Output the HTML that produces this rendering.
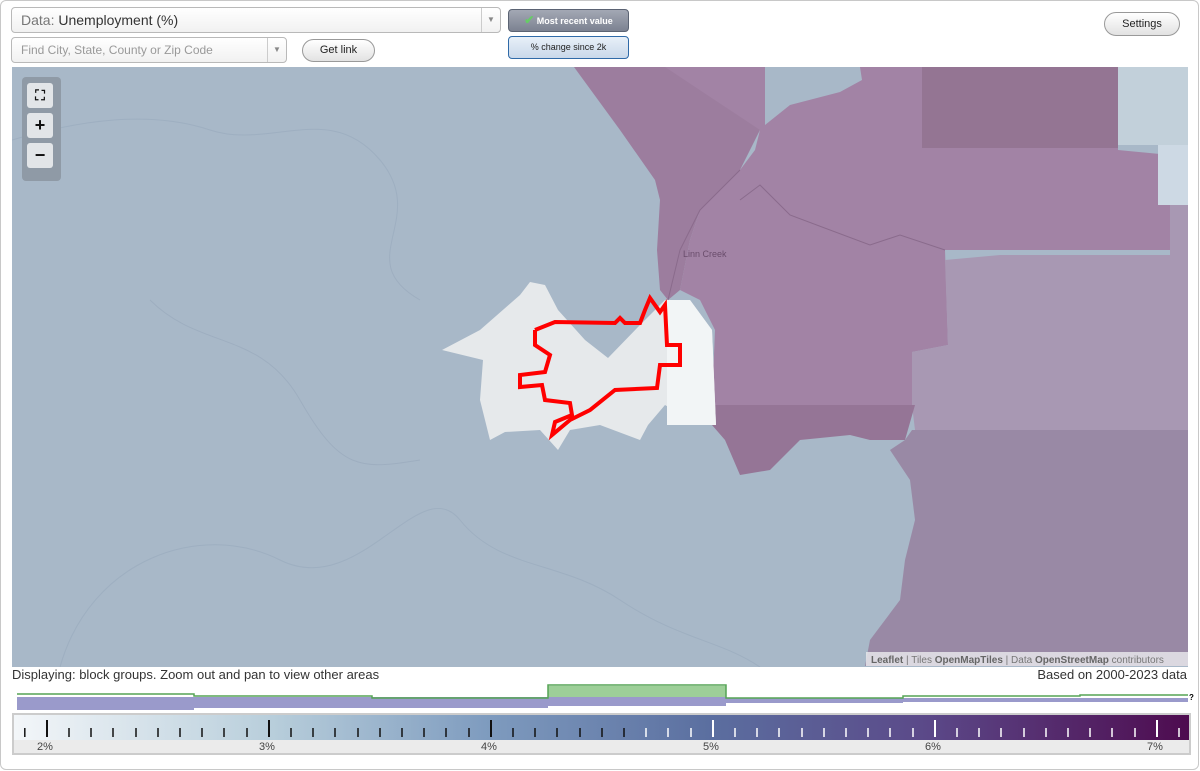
<!DOCTYPE html>
<html><head><meta charset="utf-8"><style>
*{box-sizing:border-box;margin:0;padding:0}
body{width:1200px;height:771px;background:#fff;font-family:"Liberation Sans",Arial,sans-serif;position:relative;overflow:hidden}
.frame{position:absolute;left:0;top:0;width:1199px;height:770px;border:1px solid #c8c8c8;border-radius:6px}
.sel{position:absolute;border:1px solid #b9b9b9;border-radius:4px;background:linear-gradient(#fff,#f1f1f1);color:#333}
.arr{position:absolute;right:0;top:0;bottom:0;width:19px;border-left:1px solid #ccc;color:#888;font-size:8px;text-align:center}
.btn{position:absolute;border:1px solid #999;border-radius:12px;background:linear-gradient(#fff,#e2e2e2);font-size:11px;text-align:center;color:#222}
.tb{position:absolute;border-radius:4px;font-size:9px;text-align:center}
.ctl{position:absolute;left:22px;top:77px;width:39px;height:104px;background:#8f9aa6;border-radius:4px}
.cb{position:absolute;left:5px;width:26px;height:25px;background:#e2e5e8;border-radius:3px;text-align:center;font-weight:bold;font-size:18px;line-height:25px;color:#111}
.t{position:absolute;font-size:13px;color:#333}
</style></head><body>
<div class="frame"></div>
<div class="sel" style="left:11px;top:7px;width:490px;height:26px;font-size:14px;line-height:24px;padding-left:9px"><span style="color:#777">Data:</span> Unemployment (%)<div class="arr" style="line-height:24px">▼</div></div>
<div class="sel" style="left:11px;top:37px;width:276px;height:26px;font-size:12px;line-height:24px;padding-left:9px;color:#999">Find City, State, County or Zip Code<div class="arr" style="line-height:24px">▼</div></div>
<div class="btn" style="left:302px;top:39px;width:73px;height:23px;line-height:21px">Get link</div>
<div class="tb" style="left:508px;top:9px;width:121px;height:23px;background:linear-gradient(#a3a8b4,#7c8291);border:1px solid #5b6373;color:#fff;font-weight:bold;line-height:21px"><span style="color:#6c6;font-size:12px">✔</span> Most recent value</div>
<div class="tb" style="left:508px;top:36px;width:121px;height:23px;background:linear-gradient(#e8f0f8,#c9d8ea);border:1px solid #2f6aa8;color:#222;line-height:21px">% change since 2k</div>
<div class="btn" style="left:1104px;top:12px;width:76px;height:24px;line-height:22px">Settings</div>

<svg style="position:absolute;left:12px;top:67px" width="1176" height="600" viewBox="12 67 1176 600">
<rect x="12" y="67" width="1176" height="600" fill="#a8b8c8"/>
<g fill="none" stroke="#9aabbd" stroke-width="1" opacity=".7">
<path d="M12 140 C80 120 150 110 210 130 S330 100 380 160 S350 260 420 300"/>
<path d="M60 667 C90 560 200 520 280 560 S420 470 460 520 S560 560 620 600 S720 640 760 667"/>
<path d="M150 300 C200 350 260 330 300 400 S360 470 420 460"/>
</g>
<polygon fill="#9c7d9e" points="574,67 765,67 765,120 750,150 740,170 720,190 700,210 690,240 680,290 668,300 660,290 657,250 660,200 655,180 620,130"/>
<polygon fill="#a283a5" points="665,67 765,67 765,125 790,105 840,92 862,80 860,67 922,67 922,148 1118,148 1118,150 1170,155 1170,250 945,250 948,345 912,352 912,405 712,405 715,330 700,300 680,290 690,240 700,210 740,170 755,150 760,130"/>
<polygon fill="#947593" points="922,67 1118,67 1118,148 922,148"/>
<polygon fill="#c2d0da" points="1118,67 1188,67 1188,145 1118,145"/>
<polygon fill="#a898b3" points="1170,145 1188,145 1188,430 945,430 915,430 912,405 912,352 948,345 945,260 1000,255 1170,255"/>
<polygon fill="#cdd9e4" points="1158,145 1188,145 1188,205 1158,205"/>
<polygon fill="#957596" points="712,405 915,405 905,440 870,440 850,435 800,440 770,470 740,475 725,440 712,425"/>
<polygon fill="#9989a5" points="912,430 1188,430 1188,666 865,666 870,640 900,600 905,560 915,520 910,480 890,450 905,440"/>
<polygon fill="#e6e9eb" points="442,350 480,330 520,295 530,282 545,285 558,310 585,340 608,358 640,325 665,300 690,300 712,330 716,425 700,425 665,405 648,425 640,440 600,425 570,430 558,450 540,430 505,432 490,440 480,400 483,360"/>
<polygon fill="#f2f5f6" points="667,300 690,300 712,330 716,425 667,425"/>
<polyline fill="none" stroke="#8a6b8c" stroke-width="1" points="740,170 720,190 700,210 680,250 668,300"/>
<polyline fill="none" stroke="#8a6b8c" stroke-width="1" points="740,200 760,185 790,215 830,230 870,245 900,235 945,250"/>
<polyline fill="none" stroke="#ff0000" stroke-width="4" stroke-linejoin="miter" points="535,330 555,322 615,323 620,318 625,323 640,323 645,310 650,298 660,312 665,305 667,345 680,345 680,365 660,365 657,388 615,390 590,410 570,420 552,435 555,422 572,415 570,403 545,400 542,385 520,387 520,375 545,372 550,355 535,345 535,330"/>
<text x="683" y="257" font-size="9" fill="#6a4d6c" font-family="Liberation Sans">Linn Creek</text>
<rect x="866" y="652" width="322" height="14" fill="#e6e6ea" opacity=".85"/>
<text x="871" y="663" font-size="10" fill="#777" font-family="Liberation Sans"><tspan font-weight="bold" fill="#666">Leaflet</tspan> | Tiles <tspan font-weight="bold" fill="#666">OpenMapTiles</tspan> | Data <tspan font-weight="bold" fill="#666">OpenStreetMap</tspan> contributors</text>
</svg>

<div class="ctl">
<div class="cb" style="top:6px;font-size:14px">⛶</div>
<div class="cb" style="top:36px">+</div>
<div class="cb" style="top:66px">−</div>
</div>

<div class="t" style="left:12px;top:667px">Displaying: block groups. Zoom out and pan to view other areas</div>
<div class="t" style="right:13px;top:667px">Based on 2000-2023 data</div>

<svg style="position:absolute;left:0;top:680px" width="1200" height="35" viewBox="0 680 1200 35">
<g fill="#9a9acb">
<rect x="17" y="697" width="177" height="13"/><rect x="194" y="697" width="178" height="11"/><rect x="372" y="697" width="176" height="11"/><rect x="548" y="697" width="178" height="9"/><rect x="726" y="698" width="177" height="5"/><rect x="903" y="698" width="177" height="4"/><rect x="1080" y="698" width="108" height="4"/>
</g>
<rect x="548" y="686" width="178" height="11" fill="#9dcf98"/>
<polyline fill="none" stroke="#55a455" stroke-width="1.5" points="17,694 194,694 194,696 372,696 372,698 548,698 548,685 726,685 726,698 903,698 903,696 1080,696 1080,695 1188,695"/>
<text x="1189" y="700" font-size="8" font-weight="bold" font-family="Liberation Sans">?</text>
</svg>

<div style="position:absolute;left:12px;top:713px;width:1179px;height:42px;border:2px solid #ccc;background:#ebebeb">
<div style="position:absolute;left:0;top:0;width:1175px;height:25px;background:linear-gradient(90deg,#f3f6f9 0%,#b8cedb 22%,#7f9cbf 40%,#5b6fa0 59%,#5b4888 78%,#4e0b4f 100%)"></div>
<div style="position:absolute;top:26px;left:0;width:1175px;font-size:11px;color:#444">
<span style="position:absolute;left:23px">2%</span><span style="position:absolute;left:245px">3%</span><span style="position:absolute;left:467px">4%</span><span style="position:absolute;left:689px">5%</span><span style="position:absolute;left:911px">6%</span><span style="position:absolute;left:1133px">7%</span>
</div>
</div>
<svg style="position:absolute;left:14px;top:715px" width="1175" height="25">
<g stroke="#111" stroke-width="1.5">
<line x1="10.8" y1="13" x2="10.8" y2="22"/><line x1="33" y1="5" x2="33" y2="22" stroke-width="2"/>
<line x1="55" y1="13" x2="55" y2="22"/><line x1="77" y1="13" x2="77" y2="22"/><line x1="99" y1="13" x2="99" y2="22"/><line x1="122" y1="13" x2="122" y2="22"/><line x1="144" y1="13" x2="144" y2="22"/><line x1="166" y1="13" x2="166" y2="22"/><line x1="188" y1="13" x2="188" y2="22"/><line x1="210" y1="13" x2="210" y2="22"/><line x1="233" y1="13" x2="233" y2="22"/>
<line x1="255" y1="5" x2="255" y2="22" stroke-width="2"/>
<line x1="277" y1="13" x2="277" y2="22"/><line x1="299" y1="13" x2="299" y2="22"/><line x1="321" y1="13" x2="321" y2="22"/><line x1="344" y1="13" x2="344" y2="22"/><line x1="366" y1="13" x2="366" y2="22"/><line x1="388" y1="13" x2="388" y2="22"/><line x1="410" y1="13" x2="410" y2="22"/><line x1="432" y1="13" x2="432" y2="22"/><line x1="455" y1="13" x2="455" y2="22"/>
<line x1="477" y1="5" x2="477" y2="22" stroke-width="2"/>
<line x1="499" y1="13" x2="499" y2="22"/><line x1="521" y1="13" x2="521" y2="22"/><line x1="543" y1="13" x2="543" y2="22"/><line x1="566" y1="13" x2="566" y2="22"/><line x1="588" y1="13" x2="588" y2="22"/><line x1="610" y1="13" x2="610" y2="22"/>
</g>
<g stroke="#fff" stroke-width="1.5">
<line x1="632" y1="13" x2="632" y2="22"/><line x1="654" y1="13" x2="654" y2="22"/><line x1="677" y1="13" x2="677" y2="22"/>
<line x1="699" y1="5" x2="699" y2="22" stroke-width="2"/>
<line x1="721" y1="13" x2="721" y2="22"/><line x1="743" y1="13" x2="743" y2="22"/><line x1="765" y1="13" x2="765" y2="22"/><line x1="788" y1="13" x2="788" y2="22"/><line x1="810" y1="13" x2="810" y2="22"/><line x1="832" y1="13" x2="832" y2="22"/><line x1="854" y1="13" x2="854" y2="22"/><line x1="876" y1="13" x2="876" y2="22"/><line x1="899" y1="13" x2="899" y2="22"/>
<line x1="921" y1="5" x2="921" y2="22" stroke-width="2"/>
<line x1="943" y1="13" x2="943" y2="22"/><line x1="965" y1="13" x2="965" y2="22"/><line x1="987" y1="13" x2="987" y2="22"/><line x1="1010" y1="13" x2="1010" y2="22"/><line x1="1032" y1="13" x2="1032" y2="22"/><line x1="1054" y1="13" x2="1054" y2="22"/><line x1="1076" y1="13" x2="1076" y2="22"/><line x1="1098" y1="13" x2="1098" y2="22"/><line x1="1121" y1="13" x2="1121" y2="22"/>
<line x1="1143" y1="5" x2="1143" y2="22" stroke-width="2"/>
<line x1="1165" y1="13" x2="1165" y2="22"/>
</g>
</svg>
</body></html>
